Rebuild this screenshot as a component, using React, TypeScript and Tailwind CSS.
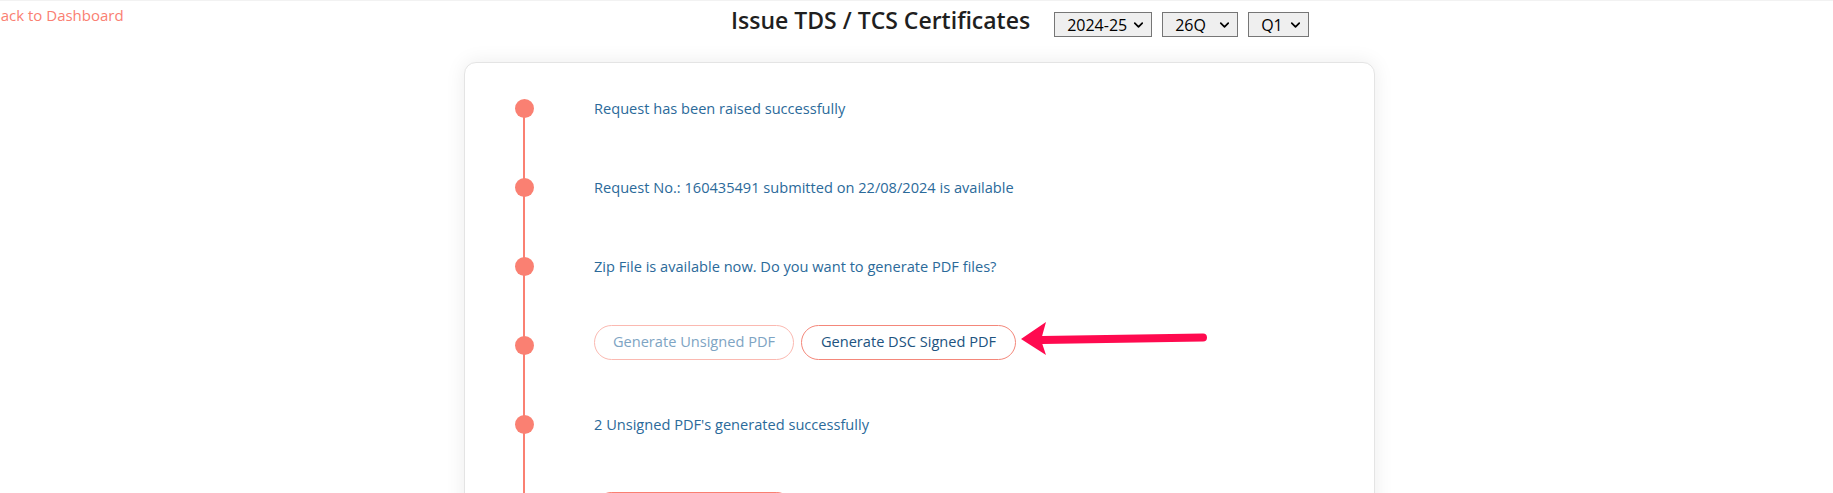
import { ChevronDown } from 'lucide-react';

interface SelectBoxProps {
  value: string;
  widthClass: string;
}

function SelectBox({ value, widthClass }: SelectBoxProps) {
  return (
    <div className={`relative h-[25px] border border-[#767676] bg-[#efefef] ${widthClass}`}>
      <select
        defaultValue={value}
        className="h-full w-full appearance-none bg-transparent pl-[12px] text-[16px] leading-none text-black outline-none"
      >
        <option value={value}>{value}</option>
      </select>
      <ChevronDown
        size={15}
        strokeWidth={2.75}
        className="pointer-events-none absolute right-[5px] top-1/2 -translate-y-1/2 text-black"
      />
    </div>
  );
}

function Dot() {
  return <span className="relative z-10 h-[19px] w-[19px] shrink-0 rounded-full bg-[#fa8072]" />;
}

export default function App() {
  return (
    <div className="relative h-[493px] overflow-hidden border-t border-[#f2f2f2] bg-white font-['Open_Sans',sans-serif]">
      {/* header */}
      <div className="flex h-[61px] items-start">
        <div className="-ml-[9px] w-[120px] shrink-0 pt-[2px]">
          <a href="#" className="whitespace-nowrap text-[15px] text-[#fa8072]">
            Back to Dashboard
          </a>
        </div>
        <div className="ml-[620px] flex items-start gap-[24px]">
          <h1 className="mt-[4px] text-[23px] font-semibold leading-[30px] text-[#1f1f1f]">
            Issue TDS / TCS Certificates
          </h1>
          <div className="mt-[11px] flex gap-[10px]">
            <SelectBox value="2024-25" widthClass="w-[98px]" />
            <SelectBox value="26Q" widthClass="w-[76px]" />
            <SelectBox value="Q1" widthClass="w-[61px]" />
          </div>
        </div>
      </div>

      {/* timeline card */}
      <div className="ml-[464px] w-[911px] rounded-[12px] border border-[#e4e4e4] bg-white shadow-[0_0_20px_rgba(0,0,0,0.08)]">
        <div className="relative pl-[50px] pt-[6px] pb-[40px]">
          <span className="absolute bottom-0 left-[58px] top-[45px] w-[2px] bg-[#fa8072]" />

          <div className="flex h-[79px] items-center">
            <Dot />
            <p className="ml-[60px] text-[14.6px] font-medium text-[#2b6a9a]">Request has been raised successfully</p>
          </div>

          <div className="flex h-[79px] items-center">
            <Dot />
            <p className="ml-[60px] text-[14.6px] font-medium text-[#2b6a9a]">
              Request No.: 160435491 submitted on 22/08/2024 is available
            </p>
          </div>

          <div className="flex h-[79px] items-center">
            <Dot />
            <p className="ml-[60px] text-[14.6px] font-medium text-[#2b6a9a]">
              Zip File is available now. Do you want to generate PDF files?
            </p>
          </div>

          <div className="flex h-[79px] items-center">
            <Dot />
            <div className="mb-[7px] ml-[60px] flex gap-[7px]">
              <button className="h-[35px] w-[200px] rounded-full border border-[#fbb9b1] text-[14.6px] font-medium text-[#7ea4c3]">
                Generate Unsigned PDF
              </button>
              <button className="h-[35px] w-[215px] rounded-full border border-[#f4877a] text-[14.6px] font-medium text-[#21537f]">
                Generate DSC Signed PDF
              </button>
            </div>
          </div>

          <div className="flex h-[79px] items-center">
            <Dot />
            <p className="ml-[60px] text-[14.6px] font-medium text-[#2b6a9a]">2 Unsigned PDF's generated successfully</p>
          </div>

          <div className="mt-[6px] flex h-[79px] items-center">
            <Dot />
            <div className="ml-[60px] flex gap-[7px]">
              <button className="h-[35px] w-[200px] rounded-full border border-[#fa8072] bg-[#fa8072] text-[14.6px] font-medium text-white">
                Download PDF Files
              </button>
            </div>
          </div>
        </div>
      </div>

      {/* annotation arrow */}
      <svg
        className="pointer-events-none absolute left-[1016px] top-[318px]"
        width="196"
        height="40"
        viewBox="0 0 196 40"
      >
        <line x1="26" y1="21" x2="187" y2="18.5" stroke="#ff0a4f" strokeWidth="8" strokeLinecap="round" />
        <polygon points="5,20 30,3 25,21 30,36" fill="#ff0a4f" />
      </svg>
    </div>
  );
}
